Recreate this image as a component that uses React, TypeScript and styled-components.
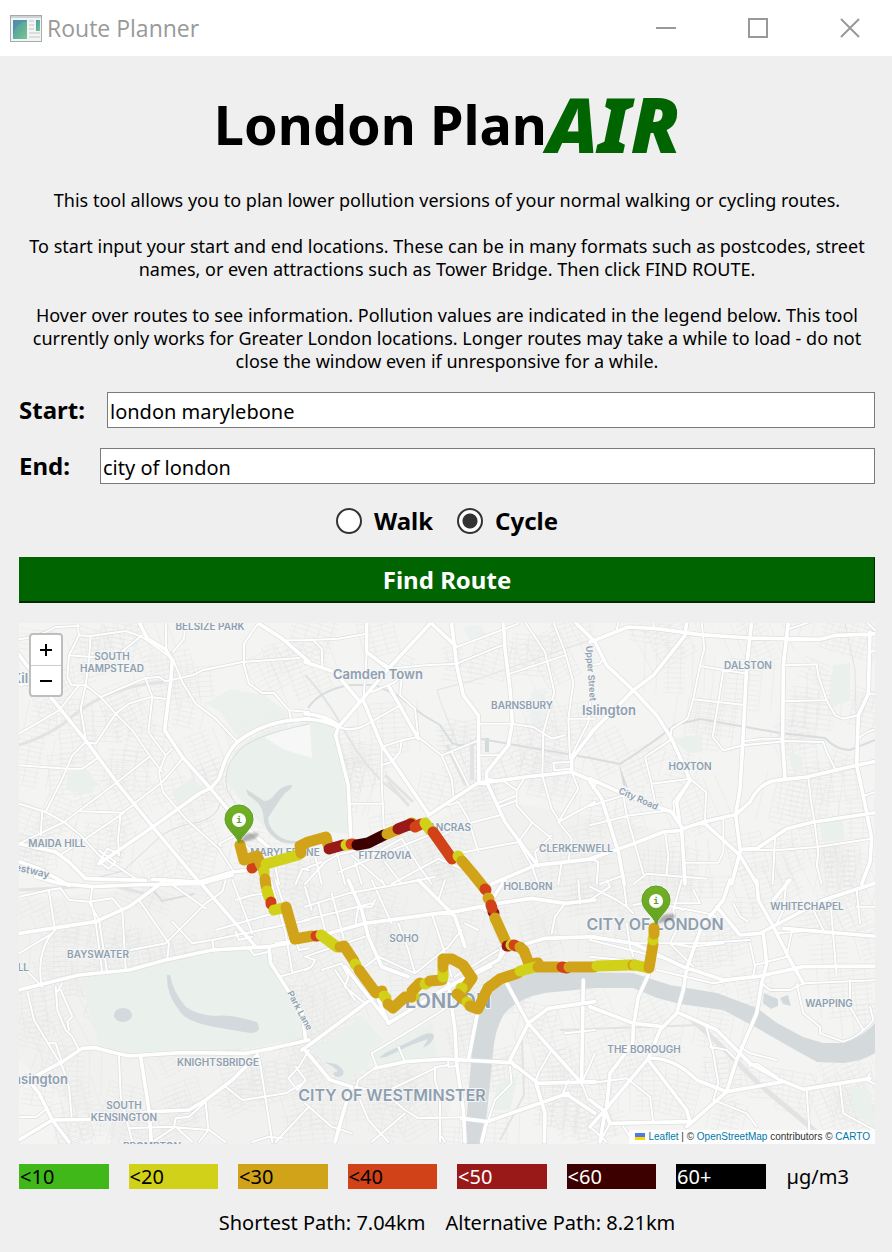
import React, { useState } from "react";
import styled, { createGlobalStyle } from "styled-components";

const GlobalStyle = createGlobalStyle`
  * { box-sizing: border-box; }
  body { margin: 0; background: #efefef; }
`;

const Window = styled.div`
  min-height: 100vh;
  background: #efefef;
  color: #000;
  font-family: "Noto Sans", "Open Sans", sans-serif;
`;

const TitleBar = styled.header`
  display: flex;
  align-items: center;
  height: 56px;
  padding-left: 10px;
  background: #fff;
`;

const WindowTitle = styled.span`
  flex: 1;
  margin-left: 5px;
  color: #999;
  font-family: "Open Sans", sans-serif;
  font-size: 23px;
  line-height: 32px;
`;

const WindowControls = styled.div`
  display: flex;
  gap: 8px;
`;

const WindowButton = styled.button`
  display: flex;
  align-items: center;
  justify-content: center;
  width: 84px;
  height: 54px;
  padding: 0;
  border: 0;
  background: transparent;
`;

const Content = styled.main`
  display: flex;
  flex-direction: column;
  gap: 20px;
  padding: 22px 17px 14px 19px;
`;

const Heading = styled.h1`
  display: flex;
  align-items: center;
  justify-content: center;
  margin: 0;
  font-size: 54px;
  line-height: 92px;
  font-weight: 700;
`;

const HeadingAccent = styled.em`
  color: #006400;
  font-size: 76px;
  font-weight: 900;
`;

const Intro = styled.div`
  margin: -1px 0;
  padding: 0 8px;
  font-size: 18px;
  line-height: 23px;
  text-align: center;

  p { margin: 0 0 23px; }
  p:last-child { margin: 0; }
`;

const Field = styled.div`
  display: flex;
  align-items: center;
`;

const FieldLabel = styled.label<{ $width: number }>`
  flex: 0 0 ${(p) => p.$width}px;
  font-size: 24px;
  line-height: 36px;
  font-weight: 700;
`;

const TextBox = styled.input`
  flex: 1;
  min-width: 0;
  height: 36px;
  padding: 2px 2px 0;
  border: 1px solid #7a7a7a;
  background: #fff;
  color: #000;
  font-family: inherit;
  font-size: 20px;
`;

const ModeRow = styled.div`
  display: flex;
  justify-content: center;
  gap: 24px;
  height: 33px;
`;

const ModeOption = styled.label`
  display: flex;
  align-items: center;
  gap: 12px;
  font-size: 24px;
  line-height: 33px;
  font-weight: 700;
`;

const Radio = styled.input`
  appearance: none;
  width: 26px;
  height: 26px;
  margin: 0;
  border: 2px solid #333;
  border-radius: 50%;
  background: #fff;

  &:checked {
    background: radial-gradient(circle, #333 0 7px, #fff 8px);
  }
`;

const FindButton = styled.button`
  height: 46px;
  padding: 0;
  border: 1px solid #006400;
  border-right-color: #002b00;
  border-bottom: 2px solid #002b00;
  background: #006400;
  color: #fff;
  font-family: inherit;
  font-size: 24px;
  line-height: 43px;
  font-weight: 700;
`;

const MapFrame = styled.section`
  position: relative;
  aspect-ratio: 856 / 521;
  overflow: hidden;
  background: #f3f3f2;
`;

const MapDrawing = styled.svg`
  display: block;
  width: 100%;
  height: 100%;
`;

const ZoomControl = styled.div`
  position: absolute;
  top: 10px;
  left: 10px;
  display: flex;
  flex-direction: column;
  border: 2px solid #bdbebe;
  border-radius: 4px;
  background: #fff;
`;

const ZoomButton = styled.button`
  display: flex;
  align-items: center;
  justify-content: center;
  width: 30px;
  height: 30px;
  padding: 0;
  border: 0;
  background: transparent;

  & + & {
    border-top: 1px solid #ccc;
  }
`;

const Attribution = styled.div`
  position: absolute;
  right: 0;
  bottom: 0;
  display: flex;
  align-items: center;
  padding: 0 5px;
  background: rgba(255, 255, 255, 0.8);
  color: #333;
  font-family: "Liberation Sans", Arial, sans-serif;
  font-size: 10px;
  line-height: 14px;
  white-space: pre;

  a { color: #0078a8; text-decoration: none; }
`;

const Legend = styled.div`
  display: grid;
  grid-template-columns: repeat(8, 1fr);
  gap: 20px;
  font-size: 20px;
  line-height: 25px;
`;

const Swatch = styled.span<{ $fill?: string; $ink?: string }>`
  padding-left: 1px;
  background: ${(p) => p.$fill ?? "transparent"};
  color: ${(p) => p.$ink ?? "#000"};
`;

const Summary = styled.footer`
  display: flex;
  justify-content: center;
  gap: 20px;
  font-size: 20px;
  line-height: 27px;
`;

type Tile = { x: number; y: number; major: string[]; minor: string[] };

// Street tiles are drawn at three units per map pixel.
const tiles: Tile[] = [
  {
    x: 19, y: 622,
    major: [
      "M355 -10 L385 50 L440 82 L460 115 L455 180 L437 325 L490 405 L575 500 L650 590 L760 685 L800 720",
      "M-10 85 L95 225 L200 355 L300 490 L410 625 L540 780",
      "M575 500 L600 470 L615 425 Q630 385 655 360 Q720 310 800 297 L870 290",
      "M575 498 L540 515 L405 612 L240 725",
      "M-10 715 L60 740 L150 790",
      "M400 772 L540 780 L640 750 L720 742",
      "M720 5 L790 50 L870 120",
      "M0 665 L110 690 L150 720 L200 770 L380 775",
    ],
    minor: [
      "M0 52 Q60 45 110 15 L180 12", "M175 0 L180 40 L150 100 L145 165 L158 190",
      "M180 40 L215 42 L210 110 L200 190 L185 260 L200 350", "M215 42 L320 27 L370 45 L460 110",
      "M150 100 L260 108 L300 95 L370 40", "M0 190 L60 180", "M500 0 L495 50 L462 90", "M440 0 L442 80",
      "M158 190 L200 190 L245 225 L350 180 L380 168 L420 165 L440 178 L520 160 L550 145 L670 120 L840 108",
      "M462 112 L490 180 L530 245 L590 290 L655 360", "M0 335 L120 265 L180 190",
      "M440 230 L395 225 L330 245 L290 275 L230 365 L200 360", "M380 170 L400 225 L388 330 L440 400 L420 450 L432 510 L500 590 L600 680 L645 750",
      "M245 225 L290 275 L340 325 L395 405 L430 450", "M0 430 L145 440 L190 440 L240 405",
      "M200 360 L160 400 L130 470 L80 570", "M390 405 L295 480 L135 600 L0 665",
      "M0 545 L80 570 L135 600 L185 640 L240 700 L290 730 L350 770", "M350 545 L305 575 L297 650 L300 700",
      "M185 568 L315 572 L200 650 L130 695", "M490 410 L465 440 L430 480 L345 545", "M70 565 L65 640", "M460 380 L440 400",
      "M720 0 L675 65 L675 130 L690 185 L730 213 L765 213 L810 265 L870 270", "M790 55 L870 55",
      "M605 672 L600 665 L650 640 L690 680 L720 740", "M240 685 L290 720 L270 740 L240 720 L265 680 L300 695",
      "M760 690 L770 740 L780 786", "M810 262 L815 290", "M830 786 L850 740 L870 745",
    ],
  },
  {
    x: 305, y: 622,
    major: [
      "M380 0 L250 140 L165 240 L100 315", "M380 5 L450 70 M440 5 L455 130 L475 220 L520 280 L522 480",
      "M595 0 L600 80 L615 200 L622 300 L610 370 L545 450 L545 480 L600 600 L690 720",
      "M370 580 L515 485 L660 465 L800 450 L870 480", "M250 190 L340 350 M175 235 L230 370 L370 575",
      "M185 0 L185 90 L250 140", "M0 290 Q60 295 100 315 L92 340 L130 490 L138 660",
      "M0 275 Q60 280 100 310", "M800 450 L800 410 L870 320", "M810 0 L860 50",
      "M560 786 L690 730 L870 710", "M0 120 L90 150 L165 240 L175 235",
    ],
    minor: [
      "M0 55 L100 50 L185 35", "M20 50 L50 80 L52 130", "M185 95 L175 235", "M250 140 L360 130 L455 125 L590 70",
      "M455 75 L640 5", "M230 120 L290 160 L270 180 L200 210", "M290 165 L285 220 L330 260 L340 345 L410 400 L440 470 L445 520",
      "M100 315 Q140 330 180 310 L285 250", "M230 375 L290 355 L340 345", "M290 355 L285 390 L260 420 L228 430",
      "M230 375 L230 480 L237 630", "M135 545 L235 545", "M235 375 L260 420", "M410 400 L520 355",
      "M440 390 L490 490", "M520 305 L620 305 L685 315 L740 350 L780 340", "M522 400 L580 400",
      "M660 0 L720 90 L748 210 L715 330 L712 460 L740 560 L765 600", "M615 155 L720 120 L780 100", "M745 0 L780 90 L805 180 L790 290 L795 410",
      "M795 420 L745 422 L748 445 L800 440", "M860 200 L850 300 L800 400", "M790 290 L870 290",
      "M550 470 L600 480 L635 505 L635 550 L680 600 L740 650", "M575 545 L635 520", "M583 555 L635 535",
      "M660 465 L635 505", "M760 600 L870 540", "M760 600 L820 500 L800 450", "M760 600 L800 650 L790 720",
      "M390 650 L470 610 L585 580", "M430 700 L640 660 L680 605", "M430 550 L460 540 L490 590 L520 690",
      "M640 660 L680 730 L700 786", "M0 786 L60 720 L95 700 L230 665", "M95 690 L120 786", "M30 700 L50 786",
      "M150 720 L170 786", "M240 720 L290 786", "M100 750 L370 640", "M200 700 L290 650 L340 730 L380 786",
      "M0 740 L50 720", "M260 786 L400 710 L470 740", "M140 700 L230 780", "M770 720 L760 786", "M700 735 L690 690 L740 640",
    ],
  },
  {
    x: 590, y: 622,
    major: [
      "M0 60 L115 15 L200 20 L330 38 L480 48 L690 52 L740 40 L870 35", "M15 60 L50 130 L130 205 L200 280 L245 350 L300 475 L260 540 L270 610",
      "M290 0 L285 40 L190 160 L130 205 L0 335", "M485 0 L470 130 L458 370 L450 500 L437 580 L450 680",
      "M595 0 L580 130 L578 360 L585 470", "M0 470 L110 520 L245 570 L278 620 L340 600 L435 578",
      "M435 580 L480 540 Q510 480 560 475 L650 465 L800 430 L870 415", "M0 710 L130 665 L220 630 L275 625 L280 700 L285 786",
      "M800 430 L805 280 L835 215 L840 30", "M800 430 L830 570 L845 650 L840 720 L815 786",
      "M340 600 L450 700 L500 786 M425 786 L450 690", "M450 682 L500 680 L590 620 L670 600 L870 570",
      "M0 480 L35 530 L85 690 L103 786",
    ],
    minor: [
      "M190 0 L192 20", "M335 0 L343 80 L330 130 L310 230 L293 290 L245 320 L240 350", "M80 25 L85 0",
      "M330 132 L470 155", "M400 145 L385 240 L368 345 L400 385 L460 370", "M310 232 L458 248",
      "M583 130 L680 127 L685 160 L710 235 L735 280 L760 290 L805 280", "M580 238 L705 235", "M460 358 L520 350 L578 350",
      "M460 370 L590 357 L700 360 L710 390 L735 440", "M240 355 L165 405 L185 485 L300 470 L348 510 L345 600",
      "M0 130 L30 125 L40 110", "M0 552 L100 520", "M0 610 L120 580 L240 565", "M100 520 L110 580 L160 755",
      "M185 490 L195 540", "M295 480 L250 540 L255 590", "M225 630 L235 700 L230 755", "M130 786 L170 755 L350 770",
      "M285 722 L385 722 L400 690 L400 585", "M655 470 L665 550 L675 610 L685 690 L680 730 L695 786",
      "M450 682 L555 685 L680 675 L845 650", "M500 680 L555 645 L548 786", "M805 350 Q830 325 870 320", "M835 215 L870 215",
      "M840 90 L870 80", "M825 520 L870 505", "M830 0 L870 40", "M660 0 L600 20", "M20 480 L10 500 M0 710 L25 720 L20 786",
      "M30 786 L100 760",
    ],
  },
  {
    x: 19, y: 880,
    major: [
      "M50 -10 L120 10 L220 20 L340 15 L550 10 L640 -15", "M0 330 L180 285 L330 270 L440 240 L580 210 L750 200 L870 178",
      "M0 615 L130 545 L190 505 L230 503 Q290 520 330 528 Q380 525 490 518 L680 520 L760 505 L870 480",
      "M0 160 L230 125 L330 80 L440 0", "M750 200 L755 250 L800 320 L850 400 L860 480",
      "M0 780 L100 720 L230 718 L400 695 L510 690 L560 660 L640 600 L715 525", "M20 590 L60 640 L100 720 L150 786",
      "M550 15 L710 200", "M365 530 L390 690 L397 786",
    ],
    minor: [
      "M0 50 L90 30 L125 25 L150 60 L210 65 L240 120 L265 280", "M220 20 L215 60 L230 125 L250 280", "M90 35 L108 150 Q50 210 68 320",
      "M0 220 L100 160", "M210 65 L280 55 L310 90 L320 270", "M620 0 L610 35 L560 70 L440 190 L335 210", "M360 60 L450 190 L445 235",
      "M440 0 L560 85 M460 125 L520 190 L580 180 L585 212", "M580 180 L870 120", "M590 150 L780 95",
      "M650 155 L660 180 L700 170", "M640 0 L700 160", "M650 60 L700 45 L755 40", "M770 0 L825 170 L840 210 L870 205",
      "M770 190 L850 175 M780 290 L870 265", "M690 205 L705 225 L750 215", "M755 0 L800 160 L820 280",
      "M25 335 L45 420 L90 495 L130 560 L150 620 L158 710", "M90 490 L110 490 L130 550", "M110 320 L115 390 L140 450 L160 470 L180 510",
      "M130 310 L115 335 M125 330 L160 410 L145 425 L150 450", "M300 528 L305 650 L340 786", "M330 745 L450 740 L570 750 L620 786",
      "M560 665 L568 750 L540 786", "M560 665 L510 710 L470 715 L465 740", "M620 620 L670 660 L800 640 L850 610",
      "M720 530 L760 786", "M830 560 L860 600 L835 630 L808 595 L840 560 L870 510", "M870 680 L770 786 M700 786 L750 770 L790 775",
      "M0 710 L50 712 L85 685", "M400 786 L470 740 L520 786", "M390 700 L460 690", "M0 250 L70 320",
    ],
  },
  {
    x: 305, y: 880,
    major: [
      "M0 180 L180 130 L400 100 L450 95 L580 70 L680 55 L780 70 L870 60", "M130 0 L170 90 L190 170 L230 260 L310 290",
      "M-10 510 L20 490 L215 345 L250 430 L430 320 L580 240 L600 210 L720 175 L870 170",
      "M430 310 L450 450 L455 550 L475 690 L480 786", "M210 565 L300 545 L420 537 L620 548 L700 610 L870 605",
      "M520 385 L490 540", "M600 300 L670 430 L740 510 L830 610", "M670 430 L615 540 L630 560",
      "M0 510 L75 600 L140 620 L120 680 L90 786", "M340 0 L450 110 L480 200", "M600 0 L540 90",
      "M835 300 L830 600", "M470 715 L545 725 L790 640", "M545 725 L530 786", "M690 600 L720 700 L718 786",
      "M670 430 L730 385 L870 365", "M250 425 L120 260", "M780 640 L870 700",
    ],
    minor: [
      "M0 80 L130 40 L350 0", "M0 120 L200 70", "M0 230 L180 170", "M80 40 L120 190", "M40 70 L60 150", "M0 20 L20 90",
      "M200 0 L260 130", "M280 130 L310 210 L330 280", "M180 260 L220 230 L330 280 L430 200 L470 150", "M380 100 L410 190 L440 290",
      "M150 140 L160 80 L200 80 L210 60", "M230 0 L240 20 L390 -10", "M420 0 L400 60 L450 110", "M480 130 L520 150",
      "M580 240 L590 200", "M740 160 L750 110 L780 70", "M820 0 L825 70", "M600 210 L560 130",
      "M200 520 L350 430 L430 380", "M200 520 L215 560 L160 600 L150 640", "M300 545 L280 500", "M390 560 L390 600 L405 650 L405 786",
      "M190 660 L400 560 L430 555", "M165 660 L190 720 L250 786", "M150 620 L240 640 L300 690 L340 715 L480 712",
      "M0 670 L80 740 L140 760 M300 700 L200 786", "M0 230 L30 240 L20 260 L0 270", "M50 270 L110 250 L130 290 L120 320 L180 370",
      "M90 270 L150 360", "M430 540 L430 560 L455 558 M420 786 L410 770", "M615 560 L620 610 L570 660 L550 720",
      "M740 510 L700 580 L690 610", "M780 460 L870 450", "M870 520 L830 610 L850 660", "M770 650 L790 600", "M450 290 L580 210 M420 330 L560 260",
    ],
  },
  {
    x: 590, y: 880,
    major: [
      "M175 285 L145 350 L130 440 L128 490 L60 580 L50 680", "M335 140 L290 265 L280 330 L260 400 L210 450 L175 535 L45 690 L0 740",
      "M0 170 L130 190 L290 265 L310 270 L400 300 L500 290 L640 260 L870 258", "M520 160 L530 250 L515 310 L500 400 L440 540 L410 635 L290 740",
      "M600 0 L550 60 M870 5 L700 60 L510 160 L450 165 L380 80", "M500 0 L505 60 L550 140 L600 240 L640 310",
      "M0 380 L130 430 L220 440", "M270 400 L380 450 L480 550 L570 600 L640 628 L840 595",
      "M45 690 L60 730 L300 725", "M175 540 L290 690 L300 725", "M420 0 L400 60 L335 140", "M580 145 L870 170",
      "M175 535 Q250 530 320 600 L410 635 L580 605", "M0 660 L45 695 L30 786",
    ],
    minor: [
      "M100 0 L110 80 L130 100", "M130 75 L160 70 L250 80 L280 90", "M275 0 L250 90 L260 150 L240 190 L310 260", "M130 190 L330 190 L480 180",
      "M240 190 L300 200 L400 190", "M110 130 L120 200 L130 230", "M0 180 L120 210 L240 240", "M200 270 L370 310 L490 290",
      "M480 190 L495 260 L490 285", "M250 80 L350 100 L380 110", "M310 30 L330 70 L250 70", "M430 70 L450 110 L475 125",
      "M720 50 L740 290", "M800 30 L810 130", "M800 80 L870 80", "M660 70 L700 150", "M495 255 L590 230 L605 155",
      "M515 310 L540 330 L600 330 L640 310 L870 300", "M620 310 L640 400 L690 440 L690 460 L760 485 Q810 470 850 420 L840 380",
      "M780 300 L780 380 L820 450", "M0 610 L110 595 L180 650 L190 730", "M350 445 L370 520 L385 610 L370 660 L470 700 L500 740",
      "M450 500 L480 520 L560 540", "M360 500 L410 510 L440 540", "M475 560 L500 550 L560 590", "M650 630 L660 780",
      "M750 615 L760 700 L870 760", "M840 580 L830 600 L870 620", "M30 786 L60 730", "M0 740 L50 786 M130 786 L100 740", "M590 0 L580 90 L560 130",
      "M0 20 L80 60 L110 80", "M0 60 L60 20 L50 0", "M0 230 L100 240", "M560 160 L680 150",
    ],
  },
];

// Fine residential streets: small seeded grids scattered over the district.
function buildLanes() {
  let seed = 41;
  const rnd = () => (seed = (seed * 16807) % 2147483647) / 2147483647;
  let out = "";
  for (let k = 0; k < 300; k++) {
    const cx = 19 + rnd() * 856;
    const cy = 622 + rnd() * 522;
    const a = -0.5 + rnd() * 0.9;
    const c = Math.cos(a);
    const s = Math.sin(a);
    const w = 10 + rnd() * 14;
    const n = 2 + Math.floor(rnd() * 4);
    const pt = (x: number, y: number) => `${(cx + x * c - y * s).toFixed(1)} ${(cy + x * s + y * c).toFixed(1)}`;
    for (let i = -n; i <= n; i++) {
      out += `M${pt(-w, i * 5)}L${pt(w, i * 5)}`;
      if (i % 2) out += `M${pt(i * 6, -n * 5)}L${pt(i * 6, n * 5)}`;
    }
  }
  return out;
}
const lanes = buildLanes();

const Y = "#d1d119";
const O = "#d1a319";
const R = "#d14219";
const C = "#991919";
const D = "#3d0000";

const route: [string, string][] = [
  [R, "252,868 253,867"],
  [O, "240,845 244,860 257,856 262,867"],
  [Y, "266,864 298,855"],
  [O, "301,853 300,846 308,842 326,837 328,845"],
  [C, "329,849 343,845"],
  [Y, "346,845 347,845"],
  [R, "351,844 353,844"],
  [D, "357,845 368,843 384,835"],
  [O, "387,834 399,829"],
  [O, "411,823 412,823"],
  [C, "398,829 411,824"],
  [R, "415,827 421,824"],
  [Y, "425,823 430,830"],
  [R, "433,832 452,859"],
  [Y, "458,856 459,857"],
  [O, "462,861 473,874 485,889"],
  [R, "485,889 486,890"],
  [O, "488,898 489,899"],
  [C, "493,912 494,913"],
  [R, "491,905 492,908"],
  [O, "495,918 505,940"],
  [C, "507,946 508,946"],
  [Y, "511,945 512,945"],
  [R, "514,945 516,946"],
  [O, "520,947 524,951 529,964 538,963"],
  [Y, "264,871 264,873"],
  [O, "265,879 266,886"],
  [Y, "267,891 269,897"],
  [R, "271,902 271,904"],
  [Y, "274,910 283,908"],
  [O, "286,907 295,939 312,936"],
  [R, "316,936 317,936"],
  [Y, "321,935 337,947"],
  [O, "340,947 344,946 354,961"],
  [Y, "355,964 356,965"],
  [O, "359,970 376,993 382,991"],
  [Y, "384,996 386,998"],
  [Y, "412,997 414,996"],
  [O, "388,1004 393,1008 405,997 411,997"],
  [O, "412,991 420,983"],
  [Y, "425,984 427,983"],
  [O, "430,981 442,980"],
  [Y, "443,977 443,970"],
  [O, "443,967 443,959 452,959 463,965 472,978 465,988"],
  [Y, "461,988 462,988"],
  [O, "457,994 463,999"],
  [Y, "467,1002 468,1003"],
  [O, "470,1006 478,1009 488,988 500,979 518,973"],
  [Y, "520,971 535,967"],
  [O, "538,967 558,967"],
  [R, "562,967 567,968"],
  [O, "569,967 594,967"],
  [Y, "597,966 630,965"],
  [O, "633,965 634,965"],
  [Y, "635,965 644,967"],
  [O, "649,968 653,944"],
  [Y, "653,940 653,939"],
  [O, "654,934 654,928"],
];

type MapLabel = [text: string, x: number, y: number, size: number, anchor?: "start" | "end", angle?: number];

const labels: MapLabel[] = [
  ["MARYLEBONE", 285, 856, 10],
  ["ST PANCRAS", 471, 831, 10, "end"],
  ["LONDON", 448, 1008, 20],
  ["CITY OF LONDON", 655, 930, 16],
  ["BELSIZE PARK", 210, 630, 10],
  ["SOUTH", 112, 660, 10],
  ["HAMPSTEAD", 112, 672, 10],
  ["Kil", 12, 683, 13, "start"],
  ["MAIDA HILL", 57, 847, 10],
  ["Westway", 5, 868, 10, "start", 13],
  ["Camden Town", 378, 679, 13],
  ["BARNSBURY", 522, 709, 10],
  ["Islington", 609, 715, 13],
  ["Upper Street", 586, 646, 9, "start", 86],
  ["DALSTON", 748, 669, 10],
  ["HOXTON", 690, 770, 10],
  ["City Road", 618, 793, 9, "start", 24],
  ["CLERKENWELL", 576, 852, 10],
  ["FITZROVIA", 385, 859, 10],
  ["HOLBORN", 528, 890, 10],
  ["SOHO", 404, 942, 10],
  ["WHITECHAPEL", 807, 910, 10],
  ["WAPPING", 829, 1007, 10],
  ["THE BOROUGH", 644, 1053, 10],
  ["CITY OF WESTMINSTER", 392, 1101, 16],
  ["KNIGHTSBRIDGE", 218, 1066, 10],
  ["BAYSWATER", 98, 958, 10],
  ["NOTTING HILL", 29, 971, 10, "end"],
  ["Kensington", 68, 1084, 13, "end"],
  ["SOUTH", 124, 1109, 10],
  ["KENSINGTON", 124, 1121, 10],
  ["BROMPTON", 152, 1150, 10],
  ["Park Lane", 287, 993, 9, "start", 62],
];

const Label = styled.text`
  fill: #8f9fb0;
  stroke: #f5f6f6;
  stroke-width: 2px;
  paint-order: stroke;
  font-family: "Inter", sans-serif;
  font-weight: 600;
`;

const PinLetter = styled.text`
  fill: #5d9b1d;
  font-family: "DejaVu Sans Mono", monospace;
  font-size: 9px;
  font-weight: 700;
`;

function Pin({ x, y }: { x: number; y: number }) {
  return (
    <g transform={`translate(${x} ${y})`}>
      <path d="M0 0 L6 -8 Q15 -12 19 -9 Q20 -5 12 -3 Z" fill="#333" opacity="0.35" filter="url(#soft)" />
      <path d="M0 0 C-3 -9 -14 -14 -14 -24 A14 14 0 0 1 14 -24 C14 -14 3 -9 0 0Z" fill="url(#pin)" stroke="#5f9e20" />
      <circle cx="0" cy="-23" r="7" fill="#fff" />
      <PinLetter x="0" y="-20" textAnchor="middle">i</PinLetter>
    </g>
  );
}

function RouteMap() {
  const streets = (kind: "major" | "minor", color: string, width: number) =>
    tiles.map((t) => (
      <g key={`${t.x}-${t.y}`} transform={`translate(${t.x} ${t.y}) scale(0.333333)`} stroke={color} strokeWidth={width}>
        <path d={t[kind].join(" ")} />
      </g>
    ));

  return (
    <MapDrawing viewBox="19 623 856 521" preserveAspectRatio="xMidYMid slice" role="img" aria-label="Route map of central London">
      <defs>
        <linearGradient id="pin" x1="0" y1="0" x2="0" y2="1">
          <stop offset="0" stopColor="#72b026" />
          <stop offset="1" stopColor="#64a322" />
        </linearGradient>
        <filter id="soft" x="-50%" y="-50%" width="200%" height="200%">
          <feGaussianBlur stdDeviation="1" />
        </filter>
      </defs>
      <rect x="19" y="622" width="856" height="523" fill="#f4f4f3" />
      <path d="M240 880 L500 800 L660 830 L700 960 L480 1000 L440 1144 L120 1144 L19 1060 L19 900Z" fill="#efefee" opacity="0.7" />
      <path d={lanes} stroke="#e2e3e2" strokeWidth="1" opacity="0.42" fill="none" />
      <g fill="#eaf0ec">
        <path d="M236 750 L262 732 L309 722 L334 722 L343 770 L349 834 L330 832 L290 842 L268 832 L250 812 L225 780Z" />
        <path d="M207 703 L230 689 L246 692 L262 694 L286 711 L287 717 L238 738 L222 714Z" opacity="0.8" />
        <path d="M82 980 L166 963 L249 948 L266 957 L302 1013 L302 1037 L259 1047 L129 1055 L99 1045Z" />
        <path d="M312 1050 L362 1017 L383 1040 L372 1053 L368 1067 L342 1083Z" />
        <path d="M373 1050 L432 1023 L437 1057 L378 1067Z" />
        <path d="M68 772 L88 770 L98 785 L86 794 L66 790Z" />
        <path d="M172 792 L192 778 L204 788 L178 806Z" />
        <path d="M833 665 L850 663 L850 700 L830 708Z M672 738 L702 735 L702 752 L688 753Z M788 752 L802 756 L803 774 L792 768Z" />
        <path d="M820 820 L842 816 L845 840 L822 842Z M850 1085 L870 1090 L875 1130 L855 1112Z M497 1085 L518 1075 L510 1110 L492 1110Z" />
        <path d="M532 690 L546 688 L545 726 L530 722Z M463 627 L480 625 L486 634 L470 640Z" opacity="0.7" />
      </g>
      <path d="M264 737 L290 727 L310 724 L312 758 L285 750 L276 745Z" fill="#f6f7f6" />
      <g fill="none" stroke="#e3e3e3" strokeWidth="3">
        <path d="M19 745 Q52 735 74 715 Q102 692 146 684 L165 682" />
        <path d="M305 675 Q325 695 347 735 T405 800" strokeWidth="2" />
        <path d="M385 775 L413 802 M388 782 L409 806" />
        <path d="M447 745 L466 785 M472 740 L472 780" strokeWidth="4" />
        <path d="M465 765 L440 700 L437 690 L475 680 L590 640" strokeWidth="1" />
        <path d="M845 623 L855 670 L857 760" strokeWidth="1" />
        <path d="M690 1018 L720 1045 L760 1085 L820 1135" strokeWidth="5" />
        <path d="M522 1040 L524 1095 L500 1140" strokeWidth="2" />
        <path d="M19 890 L110 885 L150 895" />
        <path d="M560 1030 L700 1025" strokeWidth="2" />
      </g>
      <g fill="#d4dadc">
        <path d="M463 1144 L467 1113 L475 1013 Q482 993 498 980 Q518 970 545 972 L633 973 L670 985 L687 988 L717 993 L757 1008 L777 1023 L803 1037 L823 1043 L843 1043 Q863 1037 875 1023 L875 1053 Q863 1061 843 1063 L817 1062 L790 1047 L757 1028 L723 1010 L680 1004 L657 998 L633 988 L595 988 L545 993 Q518 998 505 1013 Q495 1027 493 1053 L487 1113 L482 1144Z" />
        <path d="M764 993 L773 997 L778 999 L778 1006 L771 1009 L763 1003Z M780 998 L788 995 L791 1006 L783 1004Z" />
        <path d="M246 789 L264 801 Q271 801 275 794 Q282 785 292 785 Q292 789 285 793 L277 804 L268 818 Q269 830 280 837 Q290 843 304 840 Q294 846 281 842 Q268 836 264 822 Q264 808 256 801 L248 795Z" />
        <path d="M485 738 L489 738 L489 752 L485 752Z M619 764 L628 788 L623 785Z" />
      </g>
      <g fill="#d4d9dd">
        <ellipse cx="123" cy="1015" rx="9" ry="7" />
        <path d="M167 975 L170 975 Q173 992 186 1007 Q197 1015 215 1016 Q230 1014 257 1022 Q263 1033 250 1033 L215 1027 Q185 1022 179 1010 Q166 994 167 975Z" />
        <path d="M379 1058 L385 1053 L415 1039 Q430 1030 434 1035 Q434 1043 423 1048 L428 1039 L411 1045 L386 1057Z" />
        <path d="M324 1062 L336 1064 Q346 1070 343 1075 Q336 1080 333 1073 L338 1071 L332 1066Z" />
      </g>
      <g fill="none" stroke="#d8dddf" strokeWidth="1">
        <path d="M84 881 L123 871 L162 835 Q180 824 200 822 Q218 816 220 803" />
        <path d="M309 724 Q250 736 238 752 Q222 768 227 790 Q240 812 249 820" />
        <path d="M308 708 Q320 690 350 685 L375 685 L397 695 L423 715 L440 725 L452 743 L458 745 L475 744" strokeWidth="2" />
        <path d="M475 738 L590 758 L620 764 Q650 745 675 725 L700 719 L780 733 L825 738 Q836 750 850 750 L875 740" strokeWidth="2" />
        <path d="M148 884 L162 901 L194 894" strokeWidth="2" />
      </g>
      <g fill="none" strokeLinejoin="round" strokeLinecap="round">
        {streets("minor", "#dddede", 10)}
        {streets("major", "#dddede", 15)}
        {streets("minor", "#fff", 6)}
        {streets("major", "#fff", 11)}
      </g>
      {labels.map(([text, x, y, size, anchor, angle]) => (
        <Label key={`${text}${x}`} x={x} y={y} fontSize={size} textAnchor={anchor ?? "middle"} transform={angle ? `rotate(${angle} ${x} ${y})` : undefined}>
          {text}
        </Label>
      ))}
      <g fill="none" strokeWidth="11" strokeLinejoin="round" strokeLinecap="round">
        {route.map(([color, points], i) => (
          <polyline key={i} points={points} stroke={color} />
        ))}
      </g>
      <Pin x={239} y={843} />
      <Pin x={656} y={924} />
    </MapDrawing>
  );
}

function AppIcon() {
  return (
    <svg width="32" height="27" viewBox="0 0 32 27" aria-hidden="true">
      <defs>
        <linearGradient id="pane" x1="0" y1="0" x2="1" y2="1">
          <stop offset="0" stopColor="#5a8fb5" />
          <stop offset="0.5" stopColor="#5fae98" />
          <stop offset="1" stopColor="#7cc48e" />
        </linearGradient>
      </defs>
      <rect x="0.5" y="0.5" width="31" height="26" fill="#f3f4f4" stroke="#a5abae" />
      <path d="M1 2 H31" stroke="#ccd3d7" strokeWidth="2" />
      <rect x="3" y="5" width="14" height="19" fill="url(#pane)" />
      <path d="M3 20 Q5 8 17 6 V5 H3Z" fill="#4b86ab" opacity="0.55" />
      <path d="M19 6 H24 M19 10 H24 M19 14 H24 M19 18 H30 M19 22 H30" stroke="#c3c6c8" />
      <rect x="26" y="5" width="4" height="11" fill="url(#pane)" />
    </svg>
  );
}

const legend = [
  { label: "<10", fill: "#40b81a" },
  { label: "<20", fill: Y },
  { label: "<30", fill: O },
  { label: "<40", fill: R },
  { label: "<50", fill: C, ink: "#fff" },
  { label: "<60", fill: D, ink: "#fff" },
  { label: "60+", fill: "#000", ink: "#fff" },
  { label: "µg/m3" },
];

export default function App() {
  const [start, setStart] = useState("london marylebone");
  const [end, setEnd] = useState("city of london");
  const [mode, setMode] = useState("Cycle");

  return (
    <Window>
      <GlobalStyle />
      <TitleBar>
        <AppIcon />
        <WindowTitle>Route Planner</WindowTitle>
        <WindowControls>
          <WindowButton aria-label="Minimise">
            <svg width="20" height="20" fill="none" stroke="#999" strokeWidth="2"><path d="M0 10 H20" /></svg>
          </WindowButton>
          <WindowButton aria-label="Maximise">
            <svg width="20" height="20" fill="none" stroke="#999" strokeWidth="2"><rect x="1" y="1" width="18" height="18" /></svg>
          </WindowButton>
          <WindowButton aria-label="Close">
            <svg width="20" height="20" fill="none" stroke="#999" strokeWidth="2"><path d="M1 1 L19 19 M19 1 L1 19" /></svg>
          </WindowButton>
        </WindowControls>
      </TitleBar>
      <Content>
        <Heading>
          London Plan<HeadingAccent>AIR</HeadingAccent>
        </Heading>
        <Intro>
          <p>This tool allows you to plan lower pollution versions of your normal walking or cycling routes.</p>
          <p>
            To start input your start and end locations. These can be in many formats such as postcodes, street names,
            or even attractions such as Tower Bridge. Then click FIND ROUTE.
          </p>
          <p>
            Hover over routes to see information. Pollution values are indicated in the legend below. This tool
            currently only works for Greater London locations. Longer routes may take a while to load - do not close
            the window even if unresponsive for a while.
          </p>
        </Intro>
        <Field>
          <FieldLabel htmlFor="start" $width={88}>Start:</FieldLabel>
          <TextBox id="start" value={start} onChange={(e) => setStart(e.target.value)} />
        </Field>
        <Field>
          <FieldLabel htmlFor="end" $width={81}>End:</FieldLabel>
          <TextBox id="end" value={end} onChange={(e) => setEnd(e.target.value)} />
        </Field>
        <ModeRow>
          {["Walk", "Cycle"].map((name) => (
            <ModeOption key={name}>
              <Radio type="radio" name="mode" checked={mode === name} onChange={() => setMode(name)} />
              {name}
            </ModeOption>
          ))}
        </ModeRow>
        <FindButton>Find Route</FindButton>
        <MapFrame>
          <RouteMap />
          <ZoomControl>
            <ZoomButton aria-label="Zoom in">
              <svg width="12" height="12" stroke="#000" strokeWidth="2"><path d="M0 6 H12 M6 0 V12" /></svg>
            </ZoomButton>
            <ZoomButton aria-label="Zoom out">
              <svg width="12" height="12" stroke="#000" strokeWidth="2"><path d="M0 6 H12" /></svg>
            </ZoomButton>
          </ZoomControl>
          <Attribution>
            <svg width="12" height="8" viewBox="0 0 12 8" aria-hidden="true">
              <path fill="#4c7be1" d="M1 0h10v4H1z" />
              <path fill="#ffd500" d="M1 4h10v3H1z" />
            </svg>
            <span>
              {" "}<a href="#leaflet">Leaflet</a> | © <a href="#osm">OpenStreetMap</a> contributors © <a href="#carto">CARTO</a>
            </span>
          </Attribution>
        </MapFrame>
        <Legend>
          {legend.map((item) => (
            <Swatch key={item.label} $fill={item.fill} $ink={item.ink}>{item.label}</Swatch>
          ))}
        </Legend>
        <Summary>
          <span>Shortest Path: 7.04km</span>
          <span>Alternative Path: 8.21km</span>
        </Summary>
      </Content>
    </Window>
  );
}
